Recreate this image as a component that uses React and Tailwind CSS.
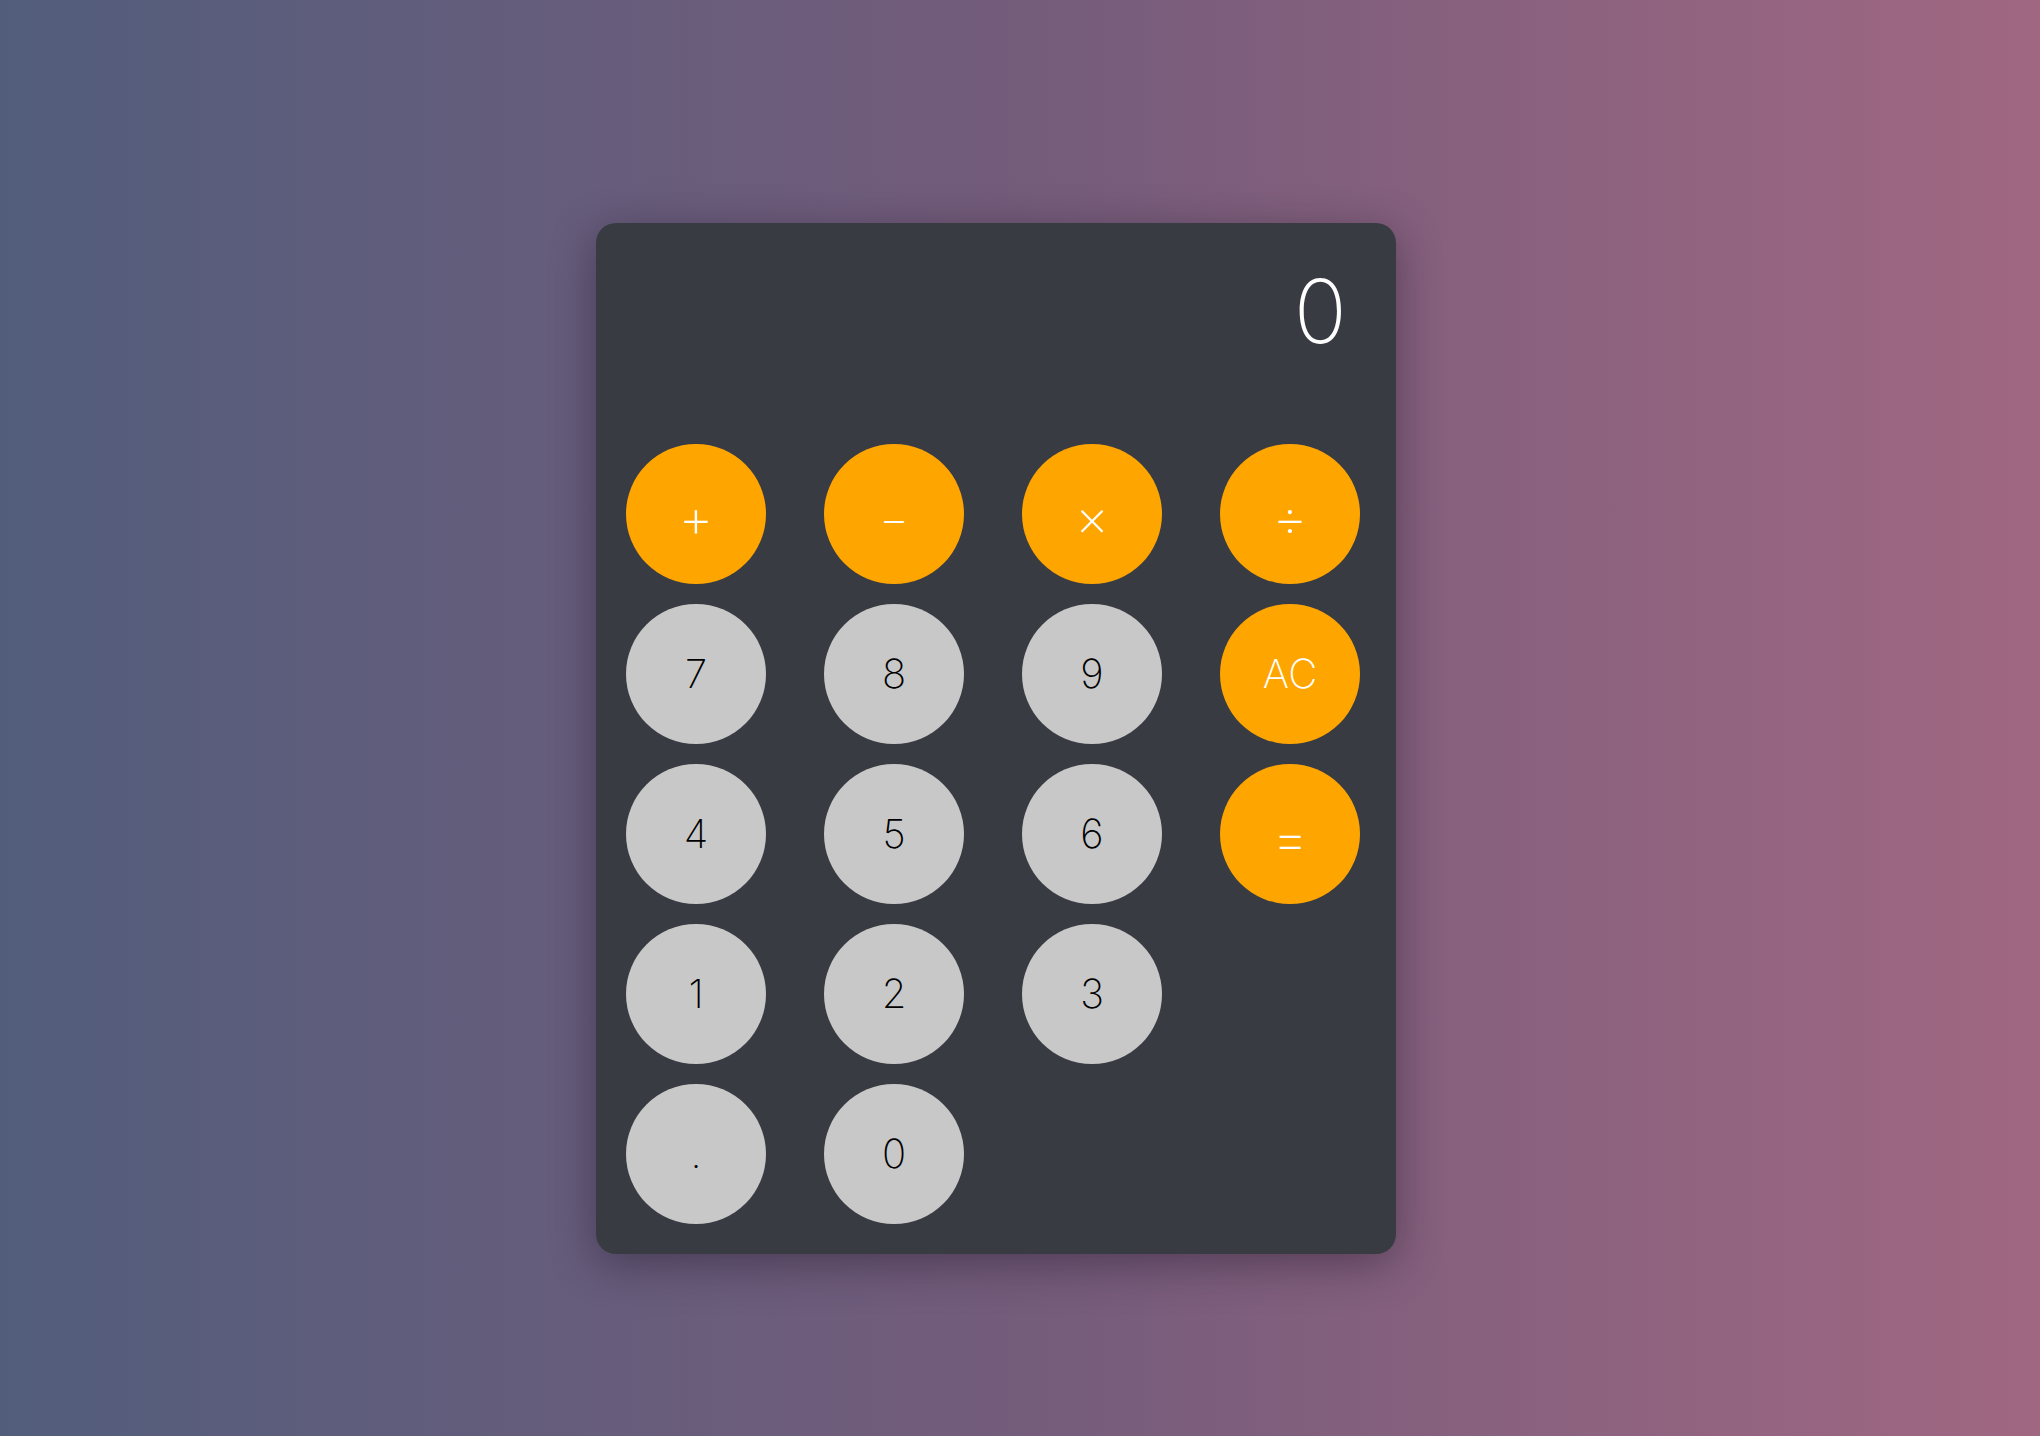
const keys = [
  { label: '+', op: true, size: 'text-[54px] pt-[8px]' },
  { label: '−', op: true, size: 'text-[46px] pt-[8px]' },
  { label: '×', op: true, size: 'text-[52px] pt-[8px]' },
  { label: '÷', op: true, size: 'text-[54px] pt-[8px]' },
  { label: '7' },
  { label: '8' },
  { label: '9' },
  { label: 'AC', op: true },
  { label: '4' },
  { label: '5' },
  { label: '6' },
  { label: '=', op: true, size: 'text-[56px] pt-[8px]' },
  { label: '1' },
  { label: '2' },
  { label: '3' },
  { label: '' },
  { label: '.' },
  { label: '0' },
];

const Key = ({ label, op, size }) => {
  if (!label) return <div className="w-[140px] h-[140px]" />;
  const base =
    'w-[140px] h-[140px] rounded-full flex items-center justify-center font-extralight leading-none';
  return (
    <button
      className={
        base +
        ' ' +
        (op ? 'bg-[#ffa500] text-white' : 'bg-[#c8c8c8] text-black') +
        ' ' +
        (size || 'text-[40px]')
      }
    >
      {label}
    </button>
  );
};

const App = () => {
  return (
    <div
      className="min-h-screen w-full bg-linear-to-r from-[#525d7c] via-[#745c7b] to-[#a06782] flex justify-center pt-[223px]"
      style={{ fontFamily: 'Inter, "Noto Sans", sans-serif' }}
    >
      <div className="w-[800px] h-[1031px] mr-[48px] bg-[#393b43] rounded-[20px] p-[30px] shadow-[0_10px_45px_rgba(30,20,40,0.45)] flex flex-col">
        {/* Display */}
        <div className="h-[191px] pt-[14px] pr-[19px] text-right text-white text-[88px] font-extralight leading-none">
          0
        </div>

        {/* Keypad */}
        <div className="grid grid-cols-[repeat(4,140px)] gap-x-[58px] gap-y-[20px]">
          {keys.map((k, i) => (
            <Key key={i} label={k.label} op={k.op} size={k.size} />
          ))}
        </div>
      </div>
    </div>
  );
};

export default App;
